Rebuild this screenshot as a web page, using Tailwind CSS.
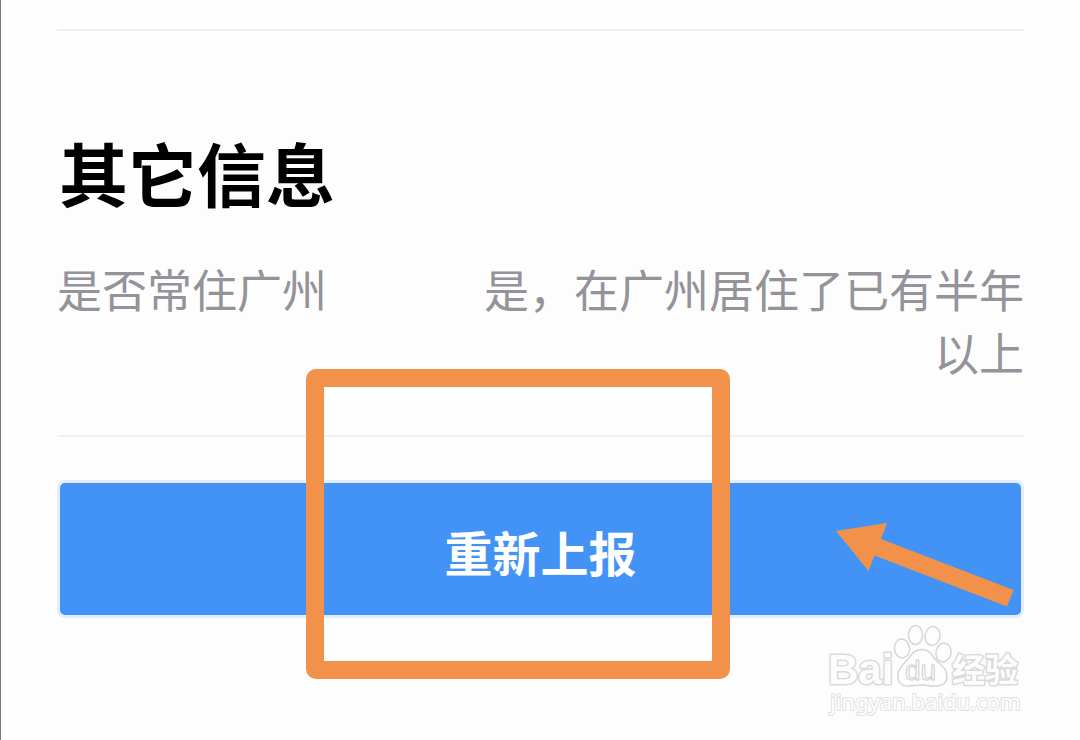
<!DOCTYPE html>
<html lang="zh-CN">
<head>
<meta charset="utf-8">
<meta name="viewport" content="width=device-width, initial-scale=1">
<title>其它信息</title>
<script src="https://cdn.jsdelivr.net/npm/@tailwindcss/browser@4"></script>
</head>
<body class="relative min-h-screen overflow-hidden border-l border-[#77777b] bg-[#fdfdfd] font-['Noto_Sans_CJK_SC',sans-serif]">
<main class="px-14 pt-[29px]">
  <section class="border-y-2 border-[#f0eff2] pt-[91px] pb-[52px]">
    <h1 class="px-[2px] text-[69px] leading-[100px] font-bold text-black">其它信息</h1>
    <dl class="mt-[35px] flex items-start justify-between text-[45px] leading-[63px] text-[#939399]">
      <dt class="shrink-0">是否常住广州</dt>
      <dd class="w-[540px] text-right">是，在广州居住了已有半年以上</dd>
    </dl>
  </section>
  <button type="button" class="mt-[43px] block h-[138px] w-full rounded-lg border-3 border-[#e3edfb] bg-[#4392f6] pt-1 text-center text-5xl font-bold text-white">重新上报</button>
</main>

<!-- Highlight frame around the button -->
<div class="pointer-events-none absolute top-[369px] left-[305px] h-[310px] w-[424px] rounded-[10px] border-18 border-[#f29149]"></div>

<!-- Arrow pointing at the button -->
<svg class="pointer-events-none absolute top-[520px] left-[833px]" width="184" height="90" viewBox="834 520 184 90" aria-hidden="true">
  <path d="M836 531L887 523L881 539L1013.500 590L1007 606.500L874.500 555.500L868.500 571Z" fill="#f29149"/>
</svg>

<!-- Site watermark -->
<svg class="pointer-events-none absolute top-[620px] left-[819px]" width="210" height="100" viewBox="820 620 210 100" role="img" aria-label="Baidu 经验 jingyan.baidu.com">
  <g fill="#fdfdfd" stroke="#dadada" stroke-width="3" paint-order="stroke" stroke-linejoin="round">
    <text x="828" y="684" font-family="Liberation Sans, sans-serif" font-weight="700" font-size="42">Bai</text>
    <text x="952" y="682" font-family="Noto Sans CJK SC, sans-serif" font-weight="700" font-size="33">经验</text>
    <text x="830" y="710" font-family="Noto Sans, sans-serif" font-size="22" stroke="#e2e2e2" stroke-width="2">jingyan.baidu.com</text>
  </g>
  <g fill="#fdfdfd" stroke="#d6d6d6" stroke-width="1.500">
    <ellipse cx="902" cy="648.500" rx="7.500" ry="9.500" transform="rotate(-8 902 648.500)"/>
    <ellipse cx="915.500" cy="635" rx="7" ry="9.500"/>
    <ellipse cx="932.500" cy="636" rx="7.500" ry="9.500" transform="rotate(10 932.500 636)"/>
    <ellipse cx="943.500" cy="652.500" rx="7.500" ry="9.500" transform="rotate(12 943.500 652.500)"/>
    <path d="M922 649.500C930 649.500 932 656 936 660C941 665 947 669 947 676C947 682 943 686 935 686C930 686 926 685 922 685C917 685 913 686 908 686C900 686 897 681 898 674C899 667 904 664 908 659C912 654 914 649.500 922 649.500Z"/>
    <text x="905" y="680" font-family="Liberation Sans, sans-serif" font-size="28" stroke="#cfcfcf" stroke-width="1">du</text>
  </g>
</svg>
</body>
</html>
